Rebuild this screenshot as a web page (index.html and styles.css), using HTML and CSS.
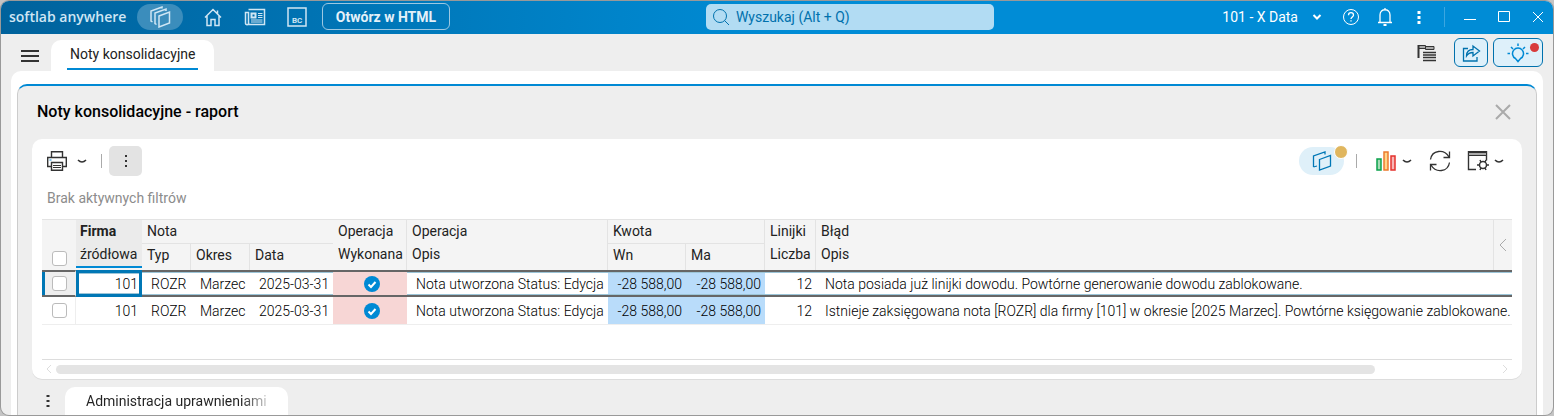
FILE: index.html
```
<!DOCTYPE html>
<html lang="pl">
<head>
  <meta charset="UTF-8">
  <title>Noty konsolidacyjne</title>
  <link rel="stylesheet" href="styles.css">
</head>
<body>

<div class="window">
  <header class="titlebar">
    <div class="title-left">
      <span class="brand">softlab anywhere</span>
      <button class="tb-btn active" aria-label="Okna">
        <svg width="26" height="22" viewBox="0 0 26 22"><path d="M12 10l10.500-4v11L12 21zM9.500 18.500L8 17.500V7l11-4v2M5.500 16L4 15V5l11-4v1.500" stroke-width="1.500"/></svg>
      </button>
      <button class="tb-btn" aria-label="Start">
        <svg width="20" height="20" viewBox="0 0 20 20"><path d="M2 10.500L10 2.500l8 8M4 9v9.500h4v-6h4v6h4V9M14.500 6.500V3.500" stroke-width="1.500"/></svg>
      </button>
      <button class="tb-btn" aria-label="Aktualności">
        <svg width="22" height="20" viewBox="0 0 22 20"><path d="M4.500 2.500h16v15H2.500a1 1 0 0 1-1-1V5.500h3v10a1.500 1.500 0 0 1-2 2" stroke-width="1.500"/><path d="M7.500 6.500h4v4h-4z" stroke-width="2"/><path d="M14 6.500h4.500M14 8.500h4.500M14 10.500h4.500M7 13h11.500M7 15h11.500"/></svg>
      </button>
      <button class="tb-btn" aria-label="BC">
        <svg width="20" height="20" viewBox="0 0 20 20"><path d="M1 1h18v18H1z" stroke-width="1.500"/><text x="5" y="16">BC</text></svg>
      </button>
      <button class="open-html">Otwórz w HTML</button>
    </div>
    <label class="search">
      <svg width="18" height="18" viewBox="0 0 18 18"><circle cx="8" cy="8" r="6.500"/><path d="M12.500 12.500L17 17"/></svg>
      <input type="text" placeholder="Wyszukaj (Alt + Q)" aria-label="Wyszukaj">
    </label>
    <div class="title-right">
      <button class="company">101 - X Data
        <svg width="10" height="6" viewBox="0 0 10 6"><path d="M1.500 1L5 4.500 8.500 1" stroke-width="2"/></svg>
      </button>
      <button class="win-btn" aria-label="Pomoc"><svg width="18" height="18" viewBox="0 0 18 18"><circle cx="9" cy="9" r="7.500"/><path d="M6.500 7.200C6.500 3.800 11.500 4 11.500 7c0 1.800-2.500 2-2.500 4M9 12.200v1.300" stroke-width="1.300"/></svg></button>
      <button class="win-btn" aria-label="Powiadomienia"><svg width="18" height="20" viewBox="0 0 18 20"><path d="M2 15.500h14M4 15.500V8c0-7 10-7 10 0v7.500M9 2.500V1" stroke-width="1.300"/><path d="M7.500 18h3" stroke-width="2"/></svg></button>
      <button class="win-btn" aria-label="Więcej"><svg width="4" height="14" viewBox="0 0 4 14"><path class="fill" d="M.5 1h3v3h-3zM.5 6h3v3h-3zM.5 11h3v3h-3z"/></svg></button>
      <span class="title-sep"></span>
      <button class="win-btn" aria-label="Minimalizuj"><svg width="12" height="12" viewBox="0 0 12 12"><path d="M0 8.500h12"/></svg></button>
      <button class="win-btn" aria-label="Maksymalizuj"><svg width="12" height="12" viewBox="0 0 12 12"><path d="M.5.5h11v10H.5z"/></svg></button>
      <button class="win-btn" aria-label="Zamknij"><svg width="12" height="12" viewBox="0 0 12 12"><path d="M1 1l10 10M11 1L1 11"/></svg></button>
    </div>
  </header>

  <nav class="tabs">
    <button class="menu-btn" aria-label="Menu"><svg width="18" height="12" viewBox="0 0 18 12"><path d="M0 1h18M0 6h18M0 11h18" stroke-width="2"/></svg></button>
    <button class="tab"><span>Noty konsolidacyjne</span></button>
    <div class="tab-tools">
      <button class="flag-btn" aria-label="Lista"><svg width="20" height="18" viewBox="0 0 20 18"><path d="M1.500 1v13" stroke-width="2"/><path d="M2 1.500h6.500v3H2zM8.500 2.500H17v3H8.500z" fill="#aaa"/><path d="M6 8.500h13M6 11h13M6 13.500h13M6 16.500h13" stroke-width="1.500"/></svg></button>
      <button class="tool-btn" aria-label="Udostępnij"><svg width="20" height="20" viewBox="0 0 20 20"><path d="M7 5.500H2.500v12.500H16V14M5.500 13c0-4.500 2.500-6.500 6.500-6.500V3l6.500 5-6.500 5V9.500c-3 0-5 1-6.500 3.500z" stroke-width="1.300"/></svg></button>
      <button class="tool-btn wide" aria-label="Podpowiedzi"><svg width="24" height="20" viewBox="0 0 24 20"><path d="M9.500 15.500a5.500 5.500 0 1 1 5 0L12 18.500zM12 .5V3M5 4l2 2M19 4l-2 2M1.500 10.500H4M20 10.500h2.500" stroke-width="1.500"/></svg><i class="dot red"></i></button>
    </div>
  </nav>

  <main class="content">
    <section class="panel">
      <div class="panel-head">
        <h1>Noty konsolidacyjne - raport</h1>
        <button class="close-btn" aria-label="Zamknij raport"><svg width="16" height="16" viewBox="0 0 16 16"><path d="M1 1l14 14M15 1L1 15" stroke-width="2"/></svg></button>
      </div>

      <div class="card">
        <div class="toolbar">
          <button class="icon-btn print" aria-label="Drukuj">
            <svg width="20" height="20" viewBox="0 0 20 20"><path d="M4.500 6V.7h11V6M4.500 15.500H.7v-9h18.600v9h-3.800M4.500 11.500h11v7.800h-11z" stroke-width="1.400"/><path d="M6 14.500h8M6 16.500h8"/><path class="blue" d="M2.500 9h2"/></svg>
            <svg width="10" height="6" viewBox="0 0 10 6"><path d="M1 2q4 4 8 0" stroke-width="1.600"/></svg>
          </button>
          <span class="sep"></span>
          <button class="more-btn" aria-label="Więcej opcji"><svg width="4" height="14" viewBox="0 0 4 14"><path class="fill" d="M1 1h2v2H1zM1 6h2v2H1zM1 11h2v2H1z"/></svg></button>
          <div class="toolbar-right">
            <button class="layers-btn" aria-label="Okna powiązane"><svg width="20" height="20" viewBox="0 0 20 20"><path d="M7.500 8.500L18.500 4.500v10.500L7.500 19zM1.500 16V5L13 1v2.500M1.500 16l3.500-1" stroke-width="1.300"/></svg><i class="dot gold"></i></button>
            <span class="sep"></span>
            <button class="icon-btn chart" aria-label="Wykres">
              <svg width="20" height="20" viewBox="0 0 20 20"><path d="M1 8h4v11H1z" fill="#a5dbb5" stroke="#0aa14b" stroke-width="1.500"/><path d="M8 1h4v18H8z" fill="#ffd58a" stroke="#ec7a2c" stroke-width="1.500"/><path d="M15 5h4v14h-4z" fill="#f7b6b6" stroke="#e5322d" stroke-width="1.500"/></svg>
              <svg width="10" height="6" viewBox="0 0 10 6"><path d="M1 2q4 4 8 0" stroke-width="1.600"/></svg>
            </button>
            <button class="icon-btn refresh" aria-label="Odśwież"><svg width="22" height="22" viewBox="0 0 22 22"><path d="M1.500 9.500C3 0 15-1.500 20 7M20.500 1.500v6h-6M20.500 12.500C19 22 7 23.500 2 15M1.500 20.500v-6h6" stroke-width="1.300"/></svg></button>
            <button class="icon-btn settings" aria-label="Ustawienia">
              <svg width="22" height="20" viewBox="0 0 22 20"><path d="M9 18.500H1.500V.7h18v8.800" stroke-width="1.400"/><path class="grey" d="M1.500 1.500h18v3h-18z"/><circle cx="16" cy="14" r="3.500" stroke-width="1.500"/><path d="M14 11l-1-2M18 11l1-2M12.500 14H10M19.500 14H22M14 17l-1 2M18 17l1 2" stroke-width="1.500"/></svg>
              <svg width="10" height="6" viewBox="0 0 10 6"><path d="M1 2q4 4 8 0" stroke-width="1.600"/></svg>
            </button>
          </div>
        </div>
        <p class="filters">Brak aktywnych filtrów</p>

        <div class="grid">
          <table>
            <colgroup>
              <col class="c-check"><col class="c-firma"><col class="c-typ"><col class="c-okres"><col class="c-data"><col class="c-wyk"><col class="c-opis"><col class="c-wn"><col class="c-ma"><col class="c-licz"><col><col class="c-arrow">
            </colgroup>
            <thead>
              <tr>
                <th rowspan="2" class="check"><input type="checkbox" aria-label="Zaznacz wszystko"></th>
                <th rowspan="2" class="sorted"><b>Firma</b><br>źródłowa</th>
                <th colspan="3" class="group">Nota</th>
                <th rowspan="2" class="line">Operacja<br>Wykonana</th>
                <th rowspan="2" class="line">Operacja<br>Opis</th>
                <th colspan="2" class="group line">Kwota</th>
                <th rowspan="2" class="line">Linijki<br>Liczba</th>
                <th rowspan="2" class="line">Błąd<br>Opis</th>
                <th rowspan="2" class="arrow"><button aria-label="Zwiń kolumny"><svg width="8" height="14" viewBox="0 0 8 14"><path d="M7 1L1 7l6 6"/></svg></button></th>
              </tr>
              <tr>
                <th class="line">Typ</th>
                <th class="line">Okres</th>
                <th>Data</th>
                <th class="line">Wn</th>
                <th class="line">Ma</th>
              </tr>
            </thead>
            <tbody>
              <tr class="selected">
                <td class="check"><input type="checkbox" aria-label="Zaznacz wiersz 1"></td>
                <td class="num focus">101</td>
                <td class="wide">ROZR</td>
                <td class="wide">Marzec</td>
                <td class="wide">2025-03-31</td>
                <td class="done"><svg width="16" height="16" viewBox="0 0 16 16"><circle cx="8" cy="8" r="8"/><path d="M4.500 8.500l2.500 2.500 4.500-5"/></svg></td>
                <td class="wide">Nota utworzona Status: Edycja</td>
                <td class="num amount">-28 588,00</td>
                <td class="num amount">-28 588,00</td>
                <td class="num">12</td>
                <td class="wide" colspan="2">Nota posiada już linijki dowodu. Powtórne generowanie dowodu zablokowane.</td>
              </tr>
              <tr>
                <td class="check"><input type="checkbox" aria-label="Zaznacz wiersz 2"></td>
                <td class="num">101</td>
                <td class="wide">ROZR</td>
                <td class="wide">Marzec</td>
                <td class="wide">2025-03-31</td>
                <td class="done"><svg width="16" height="16" viewBox="0 0 16 16"><circle cx="8" cy="8" r="8"/><path d="M4.500 8.500l2.500 2.500 4.500-5"/></svg></td>
                <td class="wide">Nota utworzona Status: Edycja</td>
                <td class="num amount">-28 588,00</td>
                <td class="num amount">-28 588,00</td>
                <td class="num">12</td>
                <td class="wide" colspan="2">Istnieje zaksięgowana nota [ROZR] dla firmy [101] w okresie [2025 Marzec]. Powtórne księgowanie zablokowane.</td>
              </tr>
            </tbody>
          </table>
        </div>
        <div class="scroll">
          <svg width="8" height="10" viewBox="0 0 8 10"><path d="M6 1L2 5l4 4"/></svg>
          <div class="track"><div class="thumb"></div></div>
          <svg width="8" height="10" viewBox="0 0 8 10"><path d="M2 1l4 4-4 4"/></svg>
        </div>
      </div>

      <div class="bottom">
        <button class="bottom-more" aria-label="Więcej zakładek"><svg width="4" height="14" viewBox="0 0 4 14"><path class="fill" d="M.5 1h3v2h-3zM.5 6h3v2h-3zM.5 11h3v2h-3z"/></svg></button>
        <button class="bottom-tab"><span>Administracja uprawnieniami</span></button>
      </div>
    </section>
  </main>
</div>

</body>
</html>
```
FILE: styles.css
```
* {
  box-sizing: border-box;
}
body {
  font-family: Roboto, "Liberation Sans", sans-serif;
  font-size: 14px;
  color: #111;
  background: #c4c4c4;
  margin: 0;
  padding: 1px;
  height: 100vh;
}
button {
  display: flex;
  align-items: center;
  justify-content: center;
  font: inherit;
  color: inherit;
  background: none;
  border: 0;
  padding: 0;
}
svg {
  fill: none;
  stroke: currentColor;
  flex: none;
}
.fill {
  fill: currentColor;
  stroke: none;
}
.window {
  height: 100%;
  display: flex;
  flex-direction: column;
  background: #eee;
  border-radius: 8px;
  box-shadow: 0 0 0 1px #999;
  overflow: hidden;
}

/* title bar */
.titlebar {
  display: grid;
  grid-template-columns: 29fr 288px 23fr;
  align-items: center;
  height: 33px;
  flex: none;
  padding-bottom: 2px;
  color: #fff;
  background: linear-gradient(90deg, #00629c, #0084ca 620px, #008cd6 800px);
}
.title-left,
.title-right {
  display: flex;
  align-items: center;
}
.title-left {
  color: #cfe6f4;
  padding-left: 8px;
}
.brand {
  font-family: "Open Sans", sans-serif;
  font-size: 14px;
  font-weight: 600;
  width: 128px;
}
.tb-btn {
  width: 42px;
  height: 26px;
}
.tb-btn.active {
  width: 46px;
  margin-right: 9px;
  border-radius: 13px;
  background: #3b8dbc;
}
.tb-btn text {
  font-size: 8px;
  font-weight: 700;
  fill: currentColor;
  stroke: none;
}
.open-html {
  width: 128px;
  height: 27px;
  margin-left: 4px;
  border: 1px solid #9cc8e2;
  border-radius: 6px;
  font-weight: 700;
  color: #e4f1f9;
}
.search {
  display: flex;
  align-items: center;
  gap: 6px;
  height: 26px;
  padding-left: 6px;
  border-radius: 5px;
  background: #b2dcf3;
  color: #0071ad;
}
.search input {
  flex: 1;
  font: inherit;
  border: 0;
  padding: 0;
  background: none;
}
.search input::placeholder {
  color: #0071ad;
}
.title-right {
  justify-content: flex-end;
  gap: 4px;
}
.company {
  gap: 14px;
  margin-right: 10px;
}
.win-btn {
  width: 30px;
  height: 26px;
}
.title-sep {
  width: 1px;
  height: 20px;
  margin: 0 6px;
  background: #3ba6e0;
}

/* tabs */
.tabs {
  display: flex;
  align-items: flex-end;
  height: 37px;
  flex: none;
}
.menu-btn {
  width: 40px;
  height: 31px;
  margin-left: 10px;
  padding-right: 2px;
  color: #333;
}
.tab {
  height: 31px;
  padding: 0 16px;
  background: #fff;
  border-radius: 10px 10px 0 0;
  color: #222;
}
.tab span {
  padding: 0 3px;
  line-height: 27px;
  border-bottom: 2px solid #0089d4;
}
.tab-tools {
  display: flex;
  align-items: center;
  gap: 5px;
  margin: 0 10px 4px auto;
}
.flag-btn {
  width: 20px;
  margin-right: 12px;
  color: #333;
}
.tool-btn {
  position: relative;
  width: 34px;
  height: 29px;
  border: 1px solid #0071ad;
  border-radius: 6px;
  background: #def0fa;
  color: #0071ad;
}
.tool-btn.wide {
  width: 50px;
  color: #0089d4;
}
.dot {
  position: absolute;
  border-radius: 50%;
}
.dot.red {
  top: 4px;
  right: 3px;
  width: 9px;
  height: 9px;
  background: #d83b3b;
}

/* panel */
.content {
  flex: 1;
  display: flex;
  min-height: 0;
  margin: 0 10px;
  padding: 13px 6px 0;
  background: #fff;
  border-radius: 10px 10px 0 0;
}
.panel {
  flex: 1;
  min-width: 0;
  padding: 0 14px;
  background: #eee;
  border: 1px solid #ccc;
  border-top: 2px solid #0089d4;
  border-bottom: 0;
  border-radius: 10px 10px 0 0;
}
.panel-head {
  display: flex;
  align-items: center;
  justify-content: space-between;
  height: 53px;
  padding: 0 11px 2px 5px;
}
h1 {
  margin: 0;
  font-size: 16px;
  font-weight: 500;
  color: #000;
}
.close-btn {
  color: #aaa;
}
.card {
  height: 240px;
  padding: 0 10px;
  background: #fff;
  border-radius: 10px;
  box-shadow: 0 1px 0 #ddd;
}
.toolbar {
  display: flex;
  align-items: center;
  height: 44px;
  padding-left: 5px;
  color: #333;
}
.blue {
  stroke: #0089d4;
}
.grey {
  fill: #aaa;
}
.sep {
  width: 1px;
  height: 14px;
  background: #aaa;
}
.print {
  gap: 10px;
  margin-right: 14px;
}
.more-btn {
  width: 33px;
  height: 30px;
  margin-left: 7px;
  border-radius: 5px;
  background: #e3e3e3;
}
.toolbar-right {
  display: flex;
  align-items: center;
  margin-left: auto;
  padding-right: 8px;
}
.layers-btn {
  position: relative;
  width: 45px;
  height: 28px;
  margin-right: 12px;
  border-radius: 14px;
  background: #dff0f9;
  color: #0077b6;
}
.dot.gold {
  top: -2px;
  right: -4px;
  width: 14px;
  height: 14px;
  background: #e0b65e;
  border: 1px solid #fff;
}
.chart {
  gap: 6px;
  margin-left: 19px;
}
.refresh {
  margin: 0 16px 0 17px;
}
.settings {
  gap: 5px;
}
.filters {
  margin: 0;
  height: 36px;
  padding-left: 5px;
  line-height: 31px;
  color: #8c8c8c;
}

/* data grid */
.grid {
  height: 141px;
  border-top: 1px solid #e3e3e3;
  border-bottom: 1px solid #ddd;
}
table {
  width: 100%;
  table-layout: fixed;
  border-collapse: separate;
  border-spacing: 0;
}
.c-check { width: 34px; }
.c-firma { width: 66px; }
.c-typ { width: 49px; }
.c-okres { width: 59px; }
.c-data { width: 83px; }
.c-wyk { width: 74px; }
.c-opis { width: 201px; }
.c-wn { width: 78px; }
.c-ma { width: 79px; }
.c-licz { width: 51px; }
.c-arrow { width: 18px; }
th {
  height: 24px;
  padding: 0 0 0 5px;
  line-height: 23px;
  font-weight: 400;
  text-align: left;
  vertical-align: top;
  color: #222;
  background: #f4f4f4;
  white-space: nowrap;
}
th.line {
  border-right: 1px solid #e3e3e3;
}
th.group {
  border-bottom: 1px solid #e3e3e3;
}
th.sorted {
  padding-left: 4px;
  background: #ebebeb;
  border-bottom: 2px solid #f4f4f4;
  box-shadow: inset 0 -2px #0089d4;
}
th.check {
  padding: 0 0 4px;
  vertical-align: bottom;
}
th.arrow {
  padding: 0;
  vertical-align: middle;
}
.arrow button {
  width: 100%;
  color: #aaa;
}
thead tr:last-child th {
  height: 26px;
}
td {
  height: 28px;
  padding: 0;
  white-space: nowrap;
  font-weight: 300;
  color: #000;
  border-bottom: 1px solid #eee;
}
td.wide {
  padding-left: 9px;
}
td.num {
  padding-right: 4px;
  text-align: right;
}
td.check {
  padding-left: 2px;
  border-right: 1px solid #eee;
}
td.done {
  padding-left: 4px;
  background: #f7d6d5;
}
td.amount {
  background: #b9dcfa;
}
.selected td {
  height: 27px;
  border-top: 2px solid #666;
  border-bottom: 2px solid #666;
  box-shadow: inset 0 1px #9cc5d8, inset 0 -1px #9cc5d8;
}
.selected td.check {
  background: #eee;
  box-shadow: inset 3px 0 #0077b5;
}
.selected td.done {
  box-shadow: none;
}
.selected td.focus {
  border: 3px solid #0077b5;
  padding-right: 1px;
}
.done svg {
  display: block;
  margin: 0 auto;
  fill: #0089d4;
  stroke: none;
}
.done path {
  fill: none;
  stroke: #fff;
  stroke-width: 2;
}
input[type="checkbox"] {
  appearance: none;
  display: block;
  width: 15px;
  height: 15px;
  margin: 0 auto;
  border: 1px solid #bbb;
  border-radius: 3px;
  background: #fff;
}
.scroll {
  display: flex;
  align-items: center;
  gap: 3px;
  height: 18px;
  padding: 0 3px;
  color: #ddd;
}
.track {
  flex: 1;
}
.thumb {
  width: 91.500%;
  height: 9px;
  border-radius: 5px;
  background: #e4e4e4;
}

/* bottom tabs */
.bottom {
  display: flex;
  align-items: flex-end;
  height: 36px;
}
.bottom-more {
  width: 32px;
  height: 28px;
  color: #333;
}
.bottom-tab {
  height: 28px;
  margin-left: 1px;
  padding: 0 21px;
  background: #fff;
  border-radius: 10px 10px 0 0;
}
.bottom-tab span {
  color: transparent;
  background: linear-gradient(90deg, #222 86%, #ccc);
  background-clip: text;
}
```
